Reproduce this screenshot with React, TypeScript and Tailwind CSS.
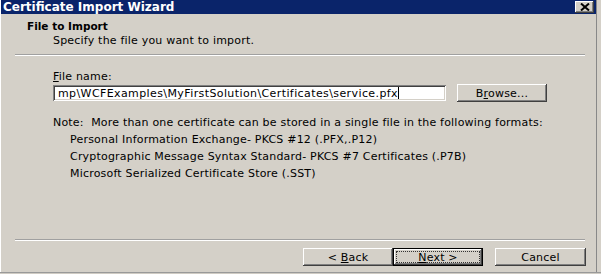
import React from "react";

const raised =
  "shadow-[inset_-1px_-1px_0_#404040,inset_1px_1px_0_#ffffff,inset_-2px_-2px_0_#808080,inset_2px_2px_0_#d4d0c8]";

function Btn({ children, w, def }: { children: React.ReactNode; w: string; def?: boolean }) {
  if (def) {
    return (
      <div className={`${w} h-[18px] border border-black bg-[#d4d0c8] flex`}>
        <div className={`flex-1 ${raised} flex items-center justify-center p-[2px]`}>
          <div className="w-full h-full border border-dotted border-[#333333] flex items-center justify-center">
            {children}
          </div>
        </div>
      </div>
    );
  }
  return (
    <div className={`${w} h-[18px] bg-[#d4d0c8] ${raised} flex items-center justify-center`}>{children}</div>
  );
}

export default function App() {
  return (
    <div className="w-[601px] h-[274px] bg-[#d4d0c8] flex flex-col overflow-hidden text-black text-[11px] tracking-[0.2px] leading-[13px] font-['DejaVu_Sans',sans-serif]">
      <div className="flex flex-1">
        <div className="flex-1 flex flex-col border-l border-white">
          {/* Title bar */}
          <div className="h-[14px] bg-[#0a246a] flex items-center pl-[2px] pr-[2px]">
            <span className="text-white font-bold text-[12px] tracking-normal leading-[14px] flex-1">Certificate Import Wizard</span>
            <div className={`w-[19px] h-[12px] bg-[#d4d0c8] ${raised} flex items-center justify-center`}>
              <svg width="10" height="8" viewBox="0 0 10 8">
                <path d="M1 0.5 L9 7.5 M9 0.5 L1 7.5" stroke="#000" strokeWidth="2" />
              </svg>
            </div>
          </div>
          {/* Header */}
          <div className="pl-[26px] pt-[6px] font-bold text-[10.5px] tracking-normal">File to Import</div>
          <div className="pl-[52px] mt-[1px]">Specify the file you want to import.</div>
          <div className="mt-[7px] ml-[14px] mr-[11px] h-[2px] border-t border-[#a0a0a0] border-b border-b-white" />
          {/* Body */}
          <div className="pl-[52px] flex flex-col">
            <div className="mt-[14px]">
              <span className="underline">F</span>ile name:
            </div>
            <div className="flex items-center mt-[1px]">
              <div className="w-[393px] h-[16px] bg-white shadow-[inset_1px_1px_0_#808080,inset_-1px_-1px_0_#ffffff,inset_2px_2px_0_#404040,inset_-2px_-2px_0_#d4d0c8] flex items-center pl-[5px] overflow-hidden whitespace-nowrap tracking-[0.4px]">
                <span>mp\WCFExamples\MyFirstSolution\Certificates\service.pfx</span>
                <span className="w-[1px] h-[12px] bg-black" />
              </div>
              <div className="ml-[11px]">
                <Btn w="w-[90px]">
                  <span>
                    B<span className="underline">r</span>owse...
                  </span>
                </Btn>
              </div>
            </div>
            <div className="mt-[14px] whitespace-nowrap">
              Note:&nbsp; More than one certificate can be stored in a single file in the following formats:
            </div>
            <div className="pl-[17px] flex flex-col">
              <div className="mt-[2px] h-[17px] flex items-center">Personal Information Exchange- PKCS #12 (.PFX,.P12)</div>
              <div className="h-[17px] flex items-center">Cryptographic Message Syntax Standard- PKCS #7 Certificates (.P7B)</div>
              <div className="h-[17px] flex items-center">Microsoft Serialized Certificate Store (.SST)</div>
            </div>
          </div>
          <div className="flex-1" />
          <div className="ml-[14px] mr-[11px] h-[2px] border-t border-[#a0a0a0] border-b border-b-white" />
          <div className="flex justify-end mt-[7px] mr-[10px]">
            <Btn w="w-[90px]">
              <span>
                &lt; <span className="underline">B</span>ack
              </span>
            </Btn>
            <Btn w="w-[90px]" def>
              <span>
                <span className="underline">N</span>ext &gt;
              </span>
            </Btn>
            <div className="ml-[12px]">
              <Btn w="w-[91px]">
                <span>Cancel</span>
              </Btn>
            </div>
          </div>
          <div className="h-[6px]" />
        </div>
        <div className="w-[5px] border-l border-[#888888]" />
      </div>
      <div className="h-[2px] border-t border-[#999999] bg-[#cfcbc3]" />
    </div>
  );
}
